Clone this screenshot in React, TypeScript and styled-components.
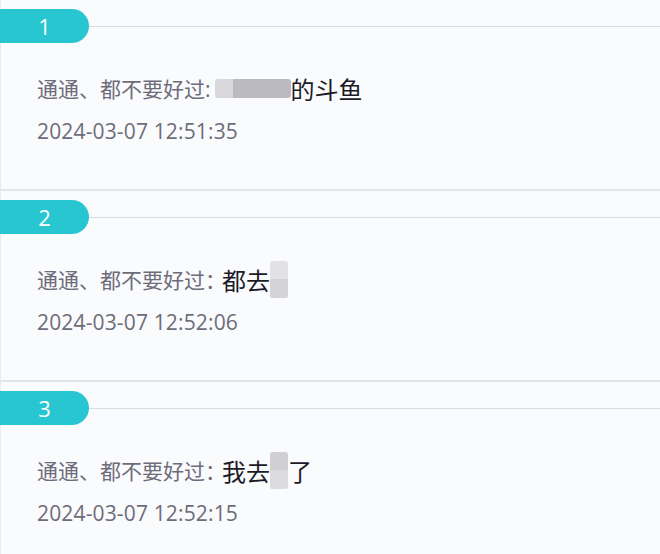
import styled, { createGlobalStyle } from "styled-components";

const Global = createGlobalStyle`
  html, body {
    margin: 0;
    padding: 0;
    background: #fafbfd;
  }
  body {
    font-family: "Open Sans", "Noto Sans CJK SC", sans-serif;
  }
`;

const List = styled.main`
  width: 660px;
  height: 554px;
  overflow: hidden;
  background: #fafbfd;
`;

const Card = styled.section`
  height: 180px;
  padding-top: 9px;
  border-left: 1px solid #e9ebef;
  border-bottom: 2px solid #e2e4e8;
  background: #fafbfd;
`;

const Header = styled.div`
  display: flex;
  align-items: center;
  margin-left: -1px;
`;

const Badge = styled.div`
  width: 89px;
  height: 34px;
  border-radius: 0 17px 17px 0;
  background: #27c6d1;
  color: #ffffff;
  font-size: 22px;
  font-weight: 500;
  line-height: 34px;
  text-align: center;
  flex-shrink: 0;
`;

const Rule = styled.div`
  flex: 1;
  height: 1px;
  background: #d9dce2;
`;

const Body = styled.div`
  padding: 30px 0 0 36px;
`;

const Line = styled.div`
  display: flex;
  align-items: center;
  height: 30px;
  font-size: 21px;
  color: #6e6c7a;
  white-space: nowrap;
`;

const Value = styled.span<{ $gap?: number }>`
  margin-left: ${(p) => p.$gap || 0}px;
  font-size: 24px;
  color: #1c1a27;
`;

const Blur = styled.span<{ $w: number; $h: number }>`
  display: inline-block;
  margin-left: 4px;
  width: ${(p) => p.$w}px;
  height: ${(p) => p.$h}px;
  border-radius: 3px;
  background: linear-gradient(90deg, #d8d8dc 0 24%, #babac0 24% 100%);
  filter: blur(0.6px);
`;

const Tall = styled.span<{ $top: string; $bottom: string }>`
  display: inline-block;
  width: 18px;
  height: 37px;
  border-radius: 3px 3px 2px 2px;
  background: linear-gradient(180deg, ${(p) => p.$top} 0 50%, ${(p) => p.$bottom} 50% 100%);
  filter: blur(0.6px);
`;

const Stamp = styled.div`
  margin-top: 13px;
  height: 30px;
  line-height: 30px;
  font-size: 21px;
  letter-spacing: 0.15px;
  color: #6e6c7a;
`;

export default function App() {
  return (
    <List>
      <Global />
      <Card>
        <Header>
          <Badge>1</Badge>
          <Rule />
        </Header>
        <Body>
          <Line>
            通通、都不要好过:
            <Blur $w={76} $h={19} />
            <Value>的斗鱼</Value>
          </Line>
          <Stamp>2024-03-07 12:51:35</Stamp>
        </Body>
      </Card>

      <Card>
        <Header>
          <Badge>2</Badge>
          <Rule />
        </Header>
        <Body>
          <Line>
            通通、都不要好过：
            <Value $gap={-4}>都去</Value>
            <Tall $top="#e2e2e6" $bottom="#d3d3d8" />
          </Line>
          <Stamp>2024-03-07 12:52:06</Stamp>
        </Body>
      </Card>

      <Card>
        <Header>
          <Badge>3</Badge>
          <Rule />
        </Header>
        <Body>
          <Line>
            通通、都不要好过：
            <Value $gap={-4}>我去</Value>
            <Tall $top="#cfcfd4" $bottom="#dcdce0" />
            <Value>了</Value>
          </Line>
          <Stamp>2024-03-07 12:52:15</Stamp>
        </Body>
      </Card>
    </List>
  );
}
